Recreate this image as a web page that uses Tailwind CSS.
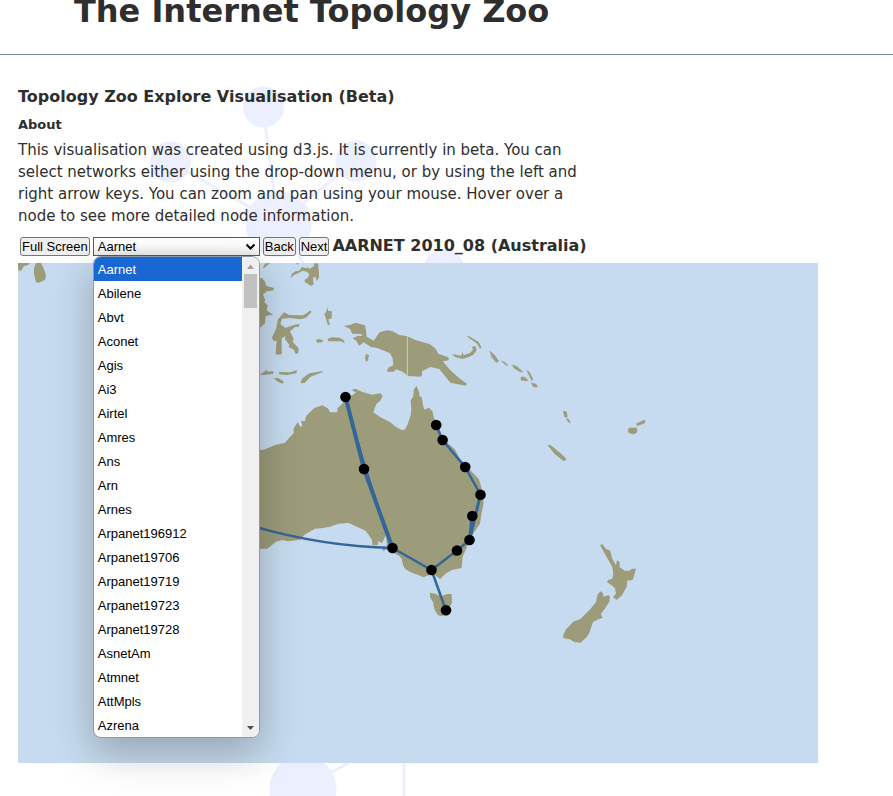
<!DOCTYPE html>
<html lang="en">
<head>
<meta charset="utf-8">
<meta name="viewport" content="width=device-width, initial-scale=1">
<title>The Internet Topology Zoo</title>
<script src="https://cdn.jsdelivr.net/npm/@tailwindcss/browser@4"></script>
</head>
<body class="relative min-h-screen overflow-x-hidden bg-white font-['DejaVu_Sans',Verdana,sans-serif] text-[#2e2e2e]">

<!-- Decorative network behind the page -->
<svg class="pointer-events-none absolute left-0 top-0 -z-10 h-[796px] w-[893px]" viewBox="0 0 893 796" aria-hidden="true">
  <g stroke="#ebefff" stroke-width="3" fill="none">
    <path d="M263 107L278 223L170 162M278 223L356 161M278 223L306 267M303 788L352 761M404 760V796"/>
  </g>
  <g fill="#ebefff">
    <circle cx="263.500" cy="107" r="20.500"/><circle cx="170.500" cy="162" r="20.500"/><circle cx="356" cy="161" r="20.500"/>
    <circle cx="278.500" cy="224" r="33"/><circle cx="444" cy="270" r="20.500"/><circle cx="303" cy="789" r="33.500"/>
  </g>
</svg>

<header class="border-b border-[#778899] pb-[23px]">
  <h1 class="-mt-[9px] pl-[74px] text-[32px] font-bold leading-[40px]">The Internet Topology Zoo</h1>
</header>

<main class="px-[18px] pt-[30px]">
  <h2 class="text-[16px] font-bold leading-6">Topology Zoo Explore Visualisation (Beta)</h2>
  <h3 class="mt-2 text-[13px] font-bold leading-4">About</h3>
  <p class="mt-[6px] max-w-[580px] text-[15px] leading-[22px]">This visualisation was created using d3.js. It is currently in beta. You can select networks either using the drop-down menu, or by using the left and right arrow keys. You can zoom and pan using your mouse. Hover over a node to see more detailed node information.</p>

  <div class="mt-[9px] flex h-5 items-center gap-[3px] pl-[2px]">
    <button type="button" class="h-[19px] whitespace-nowrap rounded-[3px] border border-[#767676] bg-[#efefef] px-px font-['Liberation_Sans',Arial,sans-serif] text-[13px] leading-[17px] text-black">Full Screen</button>
    <div class="relative">
      <label for="network" class="sr-only">Network</label>
      <select id="network" class="block h-[19px] w-[167px] appearance-none border border-[#5a5a5a] bg-linear-to-b from-white from-40% to-[#ececec] pl-1 font-['Liberation_Sans',Arial,sans-serif] text-[13px] leading-[17px] text-black">
        <option>Aarnet</option><option>Abilene</option><option>Abvt</option><option>Aconet</option>
      </select>
      <svg class="pointer-events-none absolute right-1 top-[5px] h-[9px] w-[11px]" viewBox="0 0 11 9" fill="none" stroke="#000" stroke-width="2" aria-hidden="true"><path d="M1.500 2.500L5.500 6.500L9.500 2.500"/></svg>
      <!-- Open option list -->
      <div class="absolute left-0 top-[19px] z-10 flex h-[482px] w-[167px] overflow-hidden rounded-lg border border-[#8c9aa8] bg-white shadow-[0_14px_40px_rgba(0,0,0,0.26)]">
        <ul role="listbox" aria-label="Network" class="grow font-['Liberation_Sans',Arial,sans-serif] text-[13px] leading-6 text-black">
          <li role="option" aria-selected="true" class="h-6 bg-[#1967d2] pl-1 pt-px text-white">Aarnet</li>
          <li role="option" class="h-6 pl-1 pt-px">Abilene</li>
          <li role="option" class="h-6 pl-1 pt-px">Abvt</li>
          <li role="option" class="h-6 pl-1 pt-px">Aconet</li>
          <li role="option" class="h-6 pl-1 pt-px">Agis</li>
          <li role="option" class="h-6 pl-1 pt-px">Ai3</li>
          <li role="option" class="h-6 pl-1 pt-px">Airtel</li>
          <li role="option" class="h-6 pl-1 pt-px">Amres</li>
          <li role="option" class="h-6 pl-1 pt-px">Ans</li>
          <li role="option" class="h-6 pl-1 pt-px">Arn</li>
          <li role="option" class="h-6 pl-1 pt-px">Arnes</li>
          <li role="option" class="h-6 pl-1 pt-px">Arpanet196912</li>
          <li role="option" class="h-6 pl-1 pt-px">Arpanet19706</li>
          <li role="option" class="h-6 pl-1 pt-px">Arpanet19719</li>
          <li role="option" class="h-6 pl-1 pt-px">Arpanet19723</li>
          <li role="option" class="h-6 pl-1 pt-px">Arpanet19728</li>
          <li role="option" class="h-6 pl-1 pt-px">AsnetAm</li>
          <li role="option" class="h-6 pl-1 pt-px">Atmnet</li>
          <li role="option" class="h-6 pl-1 pt-px">AttMpls</li>
          <li role="option" class="h-6 pl-1 pt-px">Azrena</li>
        </ul>
        <div class="flex w-[17px] shrink-0 flex-col items-center bg-[#f0f0f0]" aria-hidden="true">
          <svg class="h-[17px] w-[17px] shrink-0" viewBox="0 0 17 17"><path d="M5 12L8.500 7.500L12 12Z" fill="#a3a3a3"/></svg>
          <div class="h-[34px] w-[13px] shrink-0 bg-[#c1c1c1]"></div>
          <svg class="mt-auto h-[17px] w-[17px] shrink-0" viewBox="0 0 17 17"><path d="M5 6L8.500 10L12 6Z" fill="#505050"/></svg>
        </div>
      </div>
    </div>
    <button type="button" class="h-[19px] rounded-[3px] border border-[#767676] bg-[#efefef] px-px font-['Liberation_Sans',Arial,sans-serif] text-[13px] leading-[17px] text-black">Back</button>
    <button type="button" class="h-[19px] rounded-[3px] border border-[#767676] bg-[#efefef] px-px font-['Liberation_Sans',Arial,sans-serif] text-[13px] leading-[17px] text-black">Next</button>
    <h2 class="whitespace-nowrap text-[16px] font-bold leading-5">AARNET 2010_08 (Australia)</h2>
  </div>

  <svg class="mt-[7px] block w-full max-w-[800px]" viewBox="18 263 800 500" role="img" aria-label="Map of the AARNET network in Australia">
    <rect x="18" y="263" width="800" height="500" fill="#c6dbef"/>
    <g fill="#9c9c7b">
      <path d="M18 263H30L28 265L24 266L21 271L18 270ZM36 263H41L44 269L46 275L45 280L38 283L36 282L34 274L34 268Z"/>
      <!-- Indonesia and New Guinea -->
      <g transform="translate(250 260) scale(.3333)">
        <path d="M37 26L46 10H61L53 15L45 22ZM137 10H148L143 14ZM0 54H36L45 65L49 78L73 84L68 92L50 94L39 104L46 121L42 126L53 136L50 151L69 164L47 168L45 190L27 206H0Z"/>
        <path d="M156 20L167 25L172 22L178 26L190 20L194 10H204L207 38L207 52L200 63L196 50L189 54L191 73L184 78L165 67L163 60L174 53L178 42L170 35L157 32L145 40L132 44L123 54L125 42L136 34L148 32Z"/>
        <path d="M103 157L117 165L160 166L182 151L184 157L167 174L150 178L119 174L96 176L91 192L106 204L134 194L148 192L147 200L135 201L120 214L131 236L128 246L146 265L145 278L138 283L130 268L116 262L118 254L105 238L106 228L95 235L95 283L79 284L77 279L80 242L70 243L66 232L78 208L84 178Z"/>
        <path d="M232 142L235 153L246 154L245 175L235 178L240 195L234 196L226 171L223 161L228 157ZM197 240L207 237L219 241L217 247L203 249ZM233 236L245 232L268 233L280 239L285 250L272 244L235 244ZM348 281L357 286L354 301L348 306L345 293Z"/>
        <path d="M29 345L49 330L53 335L70 334L70 341L46 344ZM87 336L122 337L141 330L139 340L110 345L88 343ZM70 355L85 354L102 365L98 371L85 366ZM151 369L157 355L178 340L220 333L217 337L182 350L164 369Z"/>
        <path d="M281 198L302 194L316 188L345 196L348 211L350 230L371 242L389 217L410 211L426 213L448 225L472 229L496 240L540 253L557 266L565 281L595 292L597 301L578 304L601 331L617 345L632 358L651 371L647 377L601 368L568 327L541 321L516 334L516 346L511 350L474 348L458 335L438 328L431 335L411 335L414 324L430 315L428 295L420 280L382 264L363 261L341 247L327 257L319 242L308 235L323 228L338 227L333 222L306 221L301 207Z"/>
        <path d="M472 229V348" stroke="#d3d2b2" stroke-width="3"/>
        <path d="M606 282L634 287L637 275L641 286L661 278L669 269L666 260L677 258L680 271L670 284L655 292L638 297L615 291ZM650 229L657 229L686 246L694 262L690 267L682 251Z"/>
      </g>
      <!-- Pacific islands -->
      <g transform="translate(460 320) scale(.3333)" stroke="#9c9c7b" stroke-width="2">
        <path d="M90 94L105 107L116 124L108 127L96 112ZM125 123L134 127L143 136L138 136ZM157 135L171 140L188 155L180 155L163 145ZM201 152L207 155L219 179L215 181ZM183 171L195 172L204 182L184 181ZM214 189L228 193L233 201L220 200ZM310 274L319 275L322 290L314 291ZM320 296L326 298L331 308L325 306ZM264 376L273 377L304 403L319 417L312 423L285 402ZM508 324L530 324L531 336L522 342L508 339L504 333ZM530 311L554 300L555 308L532 317Z"/>
      </g>
      <!-- Australia -->
      <g transform="translate(250 380) scale(.3333)">
        <path d="M0 210L42 209L73 196L105 188L117 174L131 160L131 145L143 127L152 141L157 138L153 123L165 123L168 108L193 84L217 76L233 85L241 97L261 97L263 84L277 71L288 57L318 38L305 29L316 26L337 36L366 44L391 40L398 48L391 62L379 72L370 97L390 111L421 127L437 140L456 151L466 147L473 133L482 106L484 86L482 62L490 49L491 31L499 17L508 38L508 48L515 51L519 75L523 89L537 83L548 95L551 112L565 141L582 180L614 207L629 235L648 255L661 271L687 298L693 318L699 345L701 370L695 398L690 431L675 453L657 483L647 510L638 530L635 564L606 570L588 580L570 597L549 580L521 592L483 577L467 568L460 558L455 537L448 528L427 517L412 508L399 513L397 508L411 501L408 466L396 490L385 483L383 496L367 496L366 479L347 452L327 443L296 429L266 431L239 440L215 445L195 446L164 464L151 479L114 484L97 480L78 485L52 506H0Z"/>
        <path d="M540 638L555 641L573 649L592 642L605 642L606 669L590 696L577 709L564 706L554 690L549 667L540 651Z"/>
      </g>
      <!-- New Zealand -->
      <g transform="translate(380 480) scale(.3333)">
        <path d="M660 195L668 193L678 207L691 212L697 236L708 256L711 241L719 246L719 262L734 272L749 272L755 266L768 266L763 285L758 300L741 302L741 318L726 346L710 360L699 351L708 341L705 325L697 317L681 306L685 300L697 296L700 281L697 261L683 236Z"/>
        <path d="M662 334L669 340L671 350L686 345L690 351L688 365L674 387L663 402L668 413L655 418L639 426L628 459L621 470L602 488L583 486L569 478L551 475L549 467L559 447L580 425L602 416L632 386L648 366L653 343Z"/>
      </g>
    </g>
    <g fill="none" stroke="#336699" stroke-width="2.500">
      <path d="M230 519Q310 546 392.500 548L431.500 570L457 550.500L469.500 540M431.500 570L446 610.500M436 425L442.500 440L465 467L480.500 494.500"/>
      <path d="M480.500 494.500L469.500 540M472 516L469.500 540" stroke-width="3"/>
      <path d="M345.500 397L364 469L392.500 548" stroke-width="4"/>
      <path d="M345.500 397Q362 466 392.500 548" stroke-width="3"/>
    </g>
    <g fill="#000">
      <circle cx="345.500" cy="397" r="5.300"/><circle cx="364" cy="469" r="5.300"/><circle cx="392.500" cy="548" r="5.300"/><circle cx="431.500" cy="570" r="5.300"/><circle cx="446" cy="610.300" r="5.300"/><circle cx="457" cy="550.500" r="5.300"/><circle cx="469.500" cy="540" r="5.300"/><circle cx="472.300" cy="516" r="5.300"/><circle cx="480.500" cy="494.700" r="5.300"/><circle cx="465.200" cy="467" r="5.300"/><circle cx="442.600" cy="440" r="5.300"/><circle cx="436.200" cy="425" r="5.300"/>
    </g>
  </svg>
</main>
</body>
</html>
